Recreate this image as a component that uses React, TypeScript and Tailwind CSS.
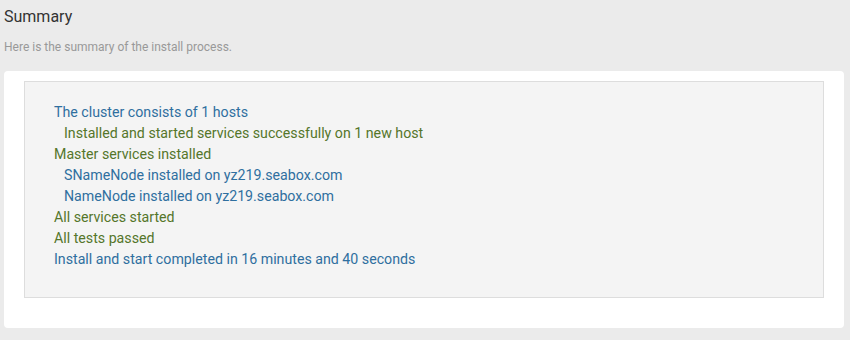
import React from "react";

const lines: { text: string; tone: "blue" | "green"; indent?: boolean }[] = [
  { text: "The cluster consists of 1 hosts", tone: "blue" },
  { text: "Installed and started services successfully on 1 new host", tone: "green", indent: true },
  { text: "Master services installed", tone: "green" },
  { text: "SNameNode installed on yz219.seabox.com", tone: "blue", indent: true },
  { text: "NameNode installed on yz219.seabox.com", tone: "blue", indent: true },
  { text: "All services started", tone: "green" },
  { text: "All tests passed", tone: "green" },
  { text: "Install and start completed in 16 minutes and 40 seconds", tone: "blue" },
];

export default function App() {
  return (
    <div
      className="w-[850px] h-[340px] bg-[#ebebeb] overflow-hidden"
      style={{ fontFamily: "Roboto, 'Liberation Sans', sans-serif" }}
    >
      <div className="px-[4px] pt-[7px]">
        <h2 className="text-[16px] leading-[20px] text-[#333333] font-normal">Summary</h2>
        <p className="mt-[12px] text-[12px] leading-[16px] text-[#999999]">
          Here is the summary of the install process.
        </p>
      </div>
      <div className="mt-[16px] ml-[4px] w-[840px] bg-white rounded-[4px] pt-[10px] pb-[30px] px-[20px]">
        <div className="w-[800px] h-[217px] border border-[#dddddd] bg-[#f4f4f4] pl-[29px] pt-[20px]">
          {lines.map((l, i) => (
            <div
              key={i}
              className={`text-[14.2px] leading-[21px] ${l.tone === "blue" ? "text-[#2f6f9f]" : "text-[#55762b]"} ${l.indent ? "pl-[10px]" : ""}`}
            >
              {l.text}
            </div>
          ))}
        </div>
      </div>
    </div>
  );
}
